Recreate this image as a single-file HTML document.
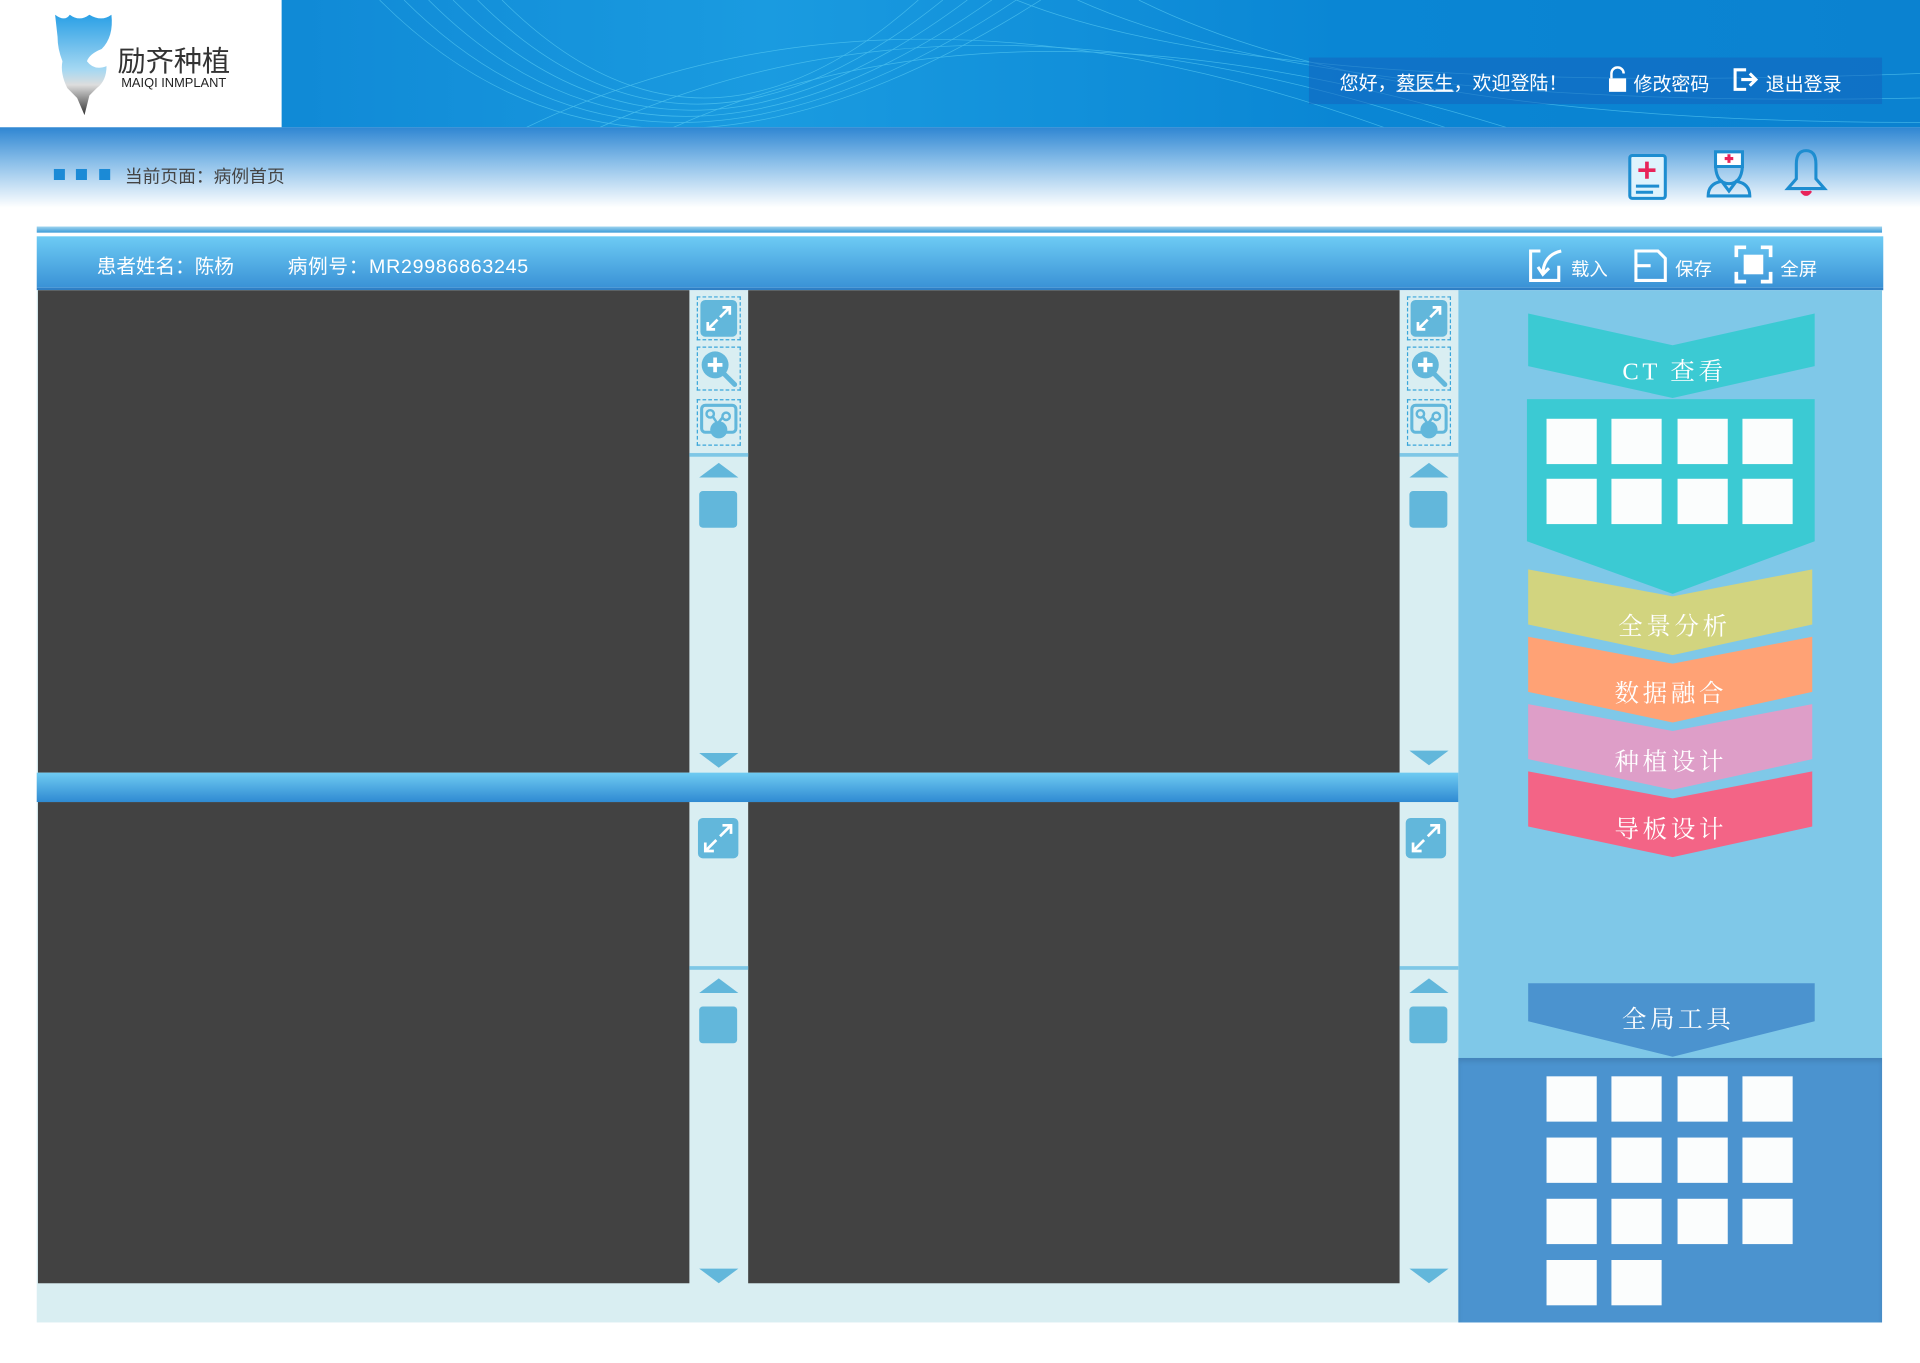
<!DOCTYPE html>
<html><head><meta charset="utf-8">
<style>
*{margin:0;padding:0;box-sizing:border-box}
html,body{width:1920px;height:1363px;overflow:hidden;background:#fff}
#w{position:absolute;left:0;top:0;width:1568px;height:1113px;transform:scale(1.22449);transform-origin:0 0;font-family:"Liberation Sans","Noto Sans CJK SC",sans-serif}
.a{position:absolute}
.hdr{left:0;top:0;width:1568px;height:104px;background:linear-gradient(90deg,#0a7fd0,#1a9be0 40%,#0a86d4 70%,#0b82d0)}
.logo{left:0;top:0;width:230px;height:104px;background:#fff}
.band{left:0;top:104px;width:1568px;height:82px;background:linear-gradient(#2f86d2,#8bbfe9 35%,#fff 80%)}
.vp{background:#424242}
.sb{background:#d9eef2}
.btn{position:absolute;left:6px;width:36px;border:1px dashed #3aa6da}
.sq{position:absolute;left:8px;width:31px;height:30px;background:#62b7db;border-radius:3px}
.up{position:absolute;left:8px;width:0;height:0;border-left:16px solid transparent;border-right:16px solid transparent;border-bottom:12px solid #62b7db}
.dn{position:absolute;left:8px;width:0;height:0;border-left:16px solid transparent;border-right:16px solid transparent;border-top:12px solid #62b7db}
.g{position:absolute;width:41px;height:37px;background:#fbfdfd}
.ct{position:absolute;color:#fff;font-size:20px;text-align:center;width:235px;font-family:"Liberation Serif","Noto Serif CJK SC",serif;letter-spacing:3px}
</style></head><body><div id="w">
<div class="a hdr"></div>
<svg class="a" style="left:230px;top:0" width="1338" height="104"><g fill="none" stroke="#5fd0f5" stroke-width=".6" opacity=".6">
<path d="M100 0 Q300 200 600 0"/><path d="M120 0 Q310 190 580 0"/><path d="M140 0 Q320 180 560 0"/><path d="M160 0 Q330 170 540 0"/><path d="M180 0 Q340 160 520 0"/><path d="M80 0 Q290 210 620 0"/>
<path d="M200 104 Q500 -40 900 104"/><path d="M260 104 Q550 -30 950 104"/><path d="M320 104 Q600 -20 1000 104"/><path d="M600 0 Q800 80 1338 60"/><path d="M650 0 Q850 90 1338 80"/><path d="M700 0 Q900 100 1338 100"/></g></svg>
<div class="a logo"></div>
<svg class="a" style="left:43px;top:10px" width="52" height="86"><defs><linearGradient id="t" x1="0" y1="0" x2="0" y2="1"><stop offset="0" stop-color="#2aa0e6"/><stop offset=".55" stop-color="#a6d8f2"/><stop offset=".7" stop-color="#ddd"/><stop offset="1" stop-color="#333"/></linearGradient></defs>
<path d="M2 2 Q10 8 14 2 Q22 8 30 2 Q40 8 48 2 Q50 20 40 30 Q30 34 28 40 Q34 48 44 44 Q44 56 36 62 L30 68 L26 84 L20 70 L12 62 Q6 50 8 40 Q4 30 4 20 Z" fill="url(#t)"/></svg>
<div class="a" style="left:96px;top:31px;font-size:23px;color:#333;letter-spacing:0">励齐种植</div>
<div class="a" style="left:99px;top:62px;font-size:10.5px;color:#222">MAIQI INMPLANT</div>
<div class="a" style="left:1069px;top:47px;width:468px;height:38px;background:rgba(20,100,190,.55)"></div>
<div class="a" style="left:1094px;top:56px;font-size:15.5px;color:#fff">您好，<u>蔡医生</u>，欢迎登陆！</div>
<svg class="a" style="left:1312px;top:54px" width="18" height="22"><path d="M4 10 V6 a5 5 0 0 1 10 0" fill="none" stroke="#fff" stroke-width="2"/><rect x="2" y="10" width="14" height="11" fill="#fff"/></svg>
<div class="a" style="left:1334px;top:57px;font-size:15.5px;color:#fff">修改密码</div>
<svg class="a" style="left:1414px;top:54px" width="24" height="22"><path d="M12 3 H3 V19 H12" fill="none" stroke="#fff" stroke-width="2.5"/><path d="M8 11 H20 M15 6 L20 11 L15 16" fill="none" stroke="#fff" stroke-width="2.5"/></svg>
<div class="a" style="left:1442px;top:57px;font-size:15.5px;color:#fff">退出登录</div>
<div class="a band"></div>
<div class="a" style="left:44px;top:138px;width:9px;height:9px;background:#1b8ad6"></div>
<div class="a" style="left:62px;top:138px;width:9px;height:9px;background:#1b8ad6"></div>
<div class="a" style="left:81px;top:138px;width:9px;height:9px;background:#1b8ad6"></div>
<div class="a" style="left:102px;top:133px;font-size:14.5px;color:#444">当前页面：病例首页</div>
<svg class="a" style="left:1328px;top:124px" width="36" height="40"><rect x="3" y="3" width="29" height="35" fill="#def3fd" stroke="#1d8dd0" stroke-width="2.5" rx="2"/><path d="M17 8 V22 M10 15 H24" stroke="#e8245a" stroke-width="3"/><path d="M8 28 H27 M8 33 H22" stroke="#1d8dd0" stroke-width="2.5"/></svg>
<svg class="a" style="left:1392px;top:120px" width="40" height="44"><path d="M9 4 H31 V16 H9 Z" fill="#fff" stroke="#1d8dd0" stroke-width="2.5"/><path d="M20 6 V13 M16.5 9.5 H23.5" stroke="#e8245a" stroke-width="2.5"/><path d="M9 16 Q10 30 20 30 Q30 30 31 16" fill="none" stroke="#1d8dd0" stroke-width="2.5"/><path d="M3 40 Q3 30 14 28 L20 36 L26 28 Q37 30 37 40 Z" fill="none" stroke="#1d8dd0" stroke-width="2.5"/></svg>
<svg class="a" style="left:1456px;top:120px" width="38" height="44"><path d="M19 3 Q11 3 11 14 V26 L4 34 H34 L27 26 V14 Q27 3 19 3Z" fill="none" stroke="#1d8dd0" stroke-width="2.5"/><path d="M15 36 Q19 42 23 36" fill="#e8245a" stroke="#e8245a" stroke-width="2"/></svg>
<div class="a" style="left:30px;top:185px;width:1507px;height:5px;background:linear-gradient(#9fd4ef,#3a9bd8)"></div>
<div class="a" style="left:30px;top:193px;width:1508px;height:44px;background:linear-gradient(#6dcbf4,#3a92d6);border-bottom:2px solid #2f7fc5"></div>
<div class="a" style="left:79px;top:204px;font-size:16px;color:#fff">患者姓名：陈杨</div>
<div class="a" style="left:235px;top:204px;font-size:16px;color:#fff;letter-spacing:.6px">病例号：MR29986863245</div>
<svg class="a" style="left:1247px;top:202px" width="32" height="30"><path d="M11 3 H3 V27 H26 V15" fill="none" stroke="#fff" stroke-width="2.5"/><path d="M28 3 Q14 6 13 21 M9 16 L13 22 L18 17" fill="none" stroke="#fff" stroke-width="2.5"/></svg>
<div class="a" style="left:1283px;top:209px;font-size:15px;color:#fff">载入</div>
<svg class="a" style="left:1333px;top:202px" width="30" height="30"><path d="M3 3 H21 L27 9 V27 H3 Z" fill="none" stroke="#fff" stroke-width="2.5"/><path d="M3 15 H15" stroke="#fff" stroke-width="2.5"/></svg>
<div class="a" style="left:1368px;top:209px;font-size:15px;color:#fff">保存</div>
<svg class="a" style="left:1416px;top:200px" width="32" height="32"><path d="M2 10 V2 H10 M22 2 H30 V10 M30 22 V30 H22 M10 30 H2 V22" fill="none" stroke="#fff" stroke-width="3"/><rect x="8" y="8" width="16" height="16" fill="#fff"/></svg>
<div class="a" style="left:1454px;top:209px;font-size:15px;color:#fff">全屏</div>

<div class="a sb" style="left:30px;top:237px;width:1161px;height:843px"></div>
<div class="a vp" style="left:31px;top:237px;width:532px;height:394px"></div>
<div class="a vp" style="left:611px;top:237px;width:532px;height:394px"></div>
<div class="a vp" style="left:31px;top:655px;width:532px;height:393px"></div>
<div class="a vp" style="left:611px;top:655px;width:532px;height:393px"></div>
<div class="a" style="left:30px;top:631px;width:1161px;height:24px;background:linear-gradient(#6fcbf2,#2f8ad2)"></div>

<div class="a" style="left:563px;top:237px;width:48px;height:394px">
 <div class="btn" style="top:5px;height:36px"></div><div class="btn" style="top:46px;height:36px"></div><div class="btn" style="top:89px;height:38px"></div>
 <svg class="a" style="left:8px;top:7px" width="32" height="32"><rect x="1" y="1" width="30" height="30" rx="4" fill="#62b7db"/><path d="M19 7 H25 V13 M25 7 L17 15 M13 25 H7 V19 M7 25 L15 17" stroke="#fff" stroke-width="2.2" fill="none"/></svg>
 <svg class="a" style="left:8px;top:48px" width="32" height="32"><circle cx="13" cy="13" r="11" fill="#62b7db"/><path d="M13 7 V19 M7 13 H19" stroke="#fff" stroke-width="3"/><path d="M21 21 L29 29" stroke="#62b7db" stroke-width="4" stroke-linecap="round"/></svg>
 <svg class="a" style="left:8px;top:92px" width="32" height="32"><rect x="2" y="2" width="28" height="22" rx="3" fill="none" stroke="#62b7db" stroke-width="2.5"/><circle cx="9" cy="9" r="3" fill="none" stroke="#62b7db" stroke-width="2"/><circle cx="22" cy="11" r="3" fill="none" stroke="#62b7db" stroke-width="2"/><path d="M11 11 L15 17 L19 12" stroke="#62b7db" stroke-width="2" fill="none"/><circle cx="16" cy="22" r="7" fill="#62b7db"/></svg>
 <div class="a" style="left:0;top:133px;width:48px;height:3px;background:#7ec7e6"></div>
 <div class="up" style="top:141px"></div><div class="sq" style="top:164px"></div><div class="dn" style="top:378px"></div>
</div>
<div class="a" style="left:1143px;top:237px;width:48px;height:394px">
 <div class="btn" style="top:5px;height:36px"></div><div class="btn" style="top:46px;height:36px"></div><div class="btn" style="top:89px;height:38px"></div>
 <svg class="a" style="left:8px;top:7px" width="32" height="32"><rect x="1" y="1" width="30" height="30" rx="4" fill="#62b7db"/><path d="M19 7 H25 V13 M25 7 L17 15 M13 25 H7 V19 M7 25 L15 17" stroke="#fff" stroke-width="2.2" fill="none"/></svg>
 <svg class="a" style="left:8px;top:48px" width="32" height="32"><circle cx="13" cy="13" r="11" fill="#62b7db"/><path d="M13 7 V19 M7 13 H19" stroke="#fff" stroke-width="3"/><path d="M21 21 L29 29" stroke="#62b7db" stroke-width="4" stroke-linecap="round"/></svg>
 <svg class="a" style="left:8px;top:92px" width="32" height="32"><rect x="2" y="2" width="28" height="22" rx="3" fill="none" stroke="#62b7db" stroke-width="2.5"/><circle cx="9" cy="9" r="3" fill="none" stroke="#62b7db" stroke-width="2"/><circle cx="22" cy="11" r="3" fill="none" stroke="#62b7db" stroke-width="2"/><path d="M11 11 L15 17 L19 12" stroke="#62b7db" stroke-width="2" fill="none"/><circle cx="16" cy="22" r="7" fill="#62b7db"/></svg>
 <div class="a" style="left:0;top:133px;width:48px;height:3px;background:#7ec7e6"></div>
 <div class="up" style="top:141px"></div><div class="sq" style="top:164px"></div><div class="dn" style="top:376px"></div>
</div>
<div class="a" style="left:563px;top:655px;width:48px;height:393px">
 <svg class="a" style="left:6px;top:12px" width="35" height="35"><rect x="1" y="1" width="33" height="33" rx="4" fill="#62b7db"/><path d="M21 7 H28 V14 M28 7 L19 16 M14 28 H7 V21 M7 28 L16 19" stroke="#fff" stroke-width="2.2" fill="none"/></svg>
 <div class="a" style="left:0;top:134px;width:48px;height:3px;background:#7ec7e6"></div>
 <div class="up" style="top:144px"></div><div class="sq" style="top:167px"></div><div class="dn" style="top:381px"></div>
</div>
<div class="a" style="left:1143px;top:655px;width:48px;height:393px">
 <svg class="a" style="left:4px;top:12px" width="35" height="35"><rect x="1" y="1" width="33" height="33" rx="4" fill="#62b7db"/><path d="M21 7 H28 V14 M28 7 L19 16 M14 28 H7 V21 M7 28 L16 19" stroke="#fff" stroke-width="2.2" fill="none"/></svg>
 <div class="a" style="left:0;top:134px;width:48px;height:3px;background:#7ec7e6"></div>
 <div class="up" style="top:144px"></div><div class="sq" style="top:167px"></div><div class="dn" style="top:381px"></div>
</div>

<div class="a" style="left:1191px;top:237px;width:346px;height:843px;background:#7fc8e8"></div>
<div class="a" style="left:1191px;top:864px;width:346px;height:216px;background:#4b93cf;box-shadow:inset 0 3px 4px rgba(0,0,0,.1)"></div>
<svg class="a" style="left:1191px;top:237px" width="346" height="640">
 <path d="M57 19 L175 45 L291 19 L291 62 L175 88 L57 62 Z" fill="#3bcad3"/>
 <path d="M56 89 H291 V205 L175 248 L56 205 Z" fill="#3bcad3"/>
 <path d="M57 228 L175 250 L289 228 L289 273 L175 298 L57 273 Z" fill="#d2d47f"/>
 <path d="M57 283 L175 305 L289 283 L289 328 L175 353 L57 328 Z" fill="#ffa275"/>
 <path d="M57 338 L175 360 L289 338 L289 383 L175 408 L57 383 Z" fill="#de9ec8"/>
 <path d="M57 393 L175 415 L289 393 L289 438 L175 463 L57 438 Z" fill="#f36486"/>
 <path d="M57 566 H291 V597 L175 626 L57 597 Z" fill="#4b93cf"/>
</svg>
<div class="ct" style="left:1250px;top:287px">CT 查看</div>
<div class="ct" style="left:1250px;top:495px">全景分析</div>
<div class="ct" style="left:1247px;top:550px">数据融合</div>
<div class="ct" style="left:1247px;top:606px">种植设计</div>
<div class="ct" style="left:1247px;top:661px">导板设计</div>
<div class="ct" style="left:1253px;top:816px">全局工具</div>
<div class="g" style="left:1263px;top:342px"></div><div class="g" style="left:1316px;top:342px"></div><div class="g" style="left:1370px;top:342px"></div><div class="g" style="left:1423px;top:342px"></div>
<div class="g" style="left:1263px;top:391px"></div><div class="g" style="left:1316px;top:391px"></div><div class="g" style="left:1370px;top:391px"></div><div class="g" style="left:1423px;top:391px"></div>
<div class="g" style="left:1263px;top:879px"></div><div class="g" style="left:1316px;top:879px"></div><div class="g" style="left:1370px;top:879px"></div><div class="g" style="left:1423px;top:879px"></div>
<div class="g" style="left:1263px;top:929px"></div><div class="g" style="left:1316px;top:929px"></div><div class="g" style="left:1370px;top:929px"></div><div class="g" style="left:1423px;top:929px"></div>
<div class="g" style="left:1263px;top:979px"></div><div class="g" style="left:1316px;top:979px"></div><div class="g" style="left:1370px;top:979px"></div><div class="g" style="left:1423px;top:979px"></div>
<div class="g" style="left:1263px;top:1029px"></div><div class="g" style="left:1316px;top:1029px"></div>
</div></body></html>
